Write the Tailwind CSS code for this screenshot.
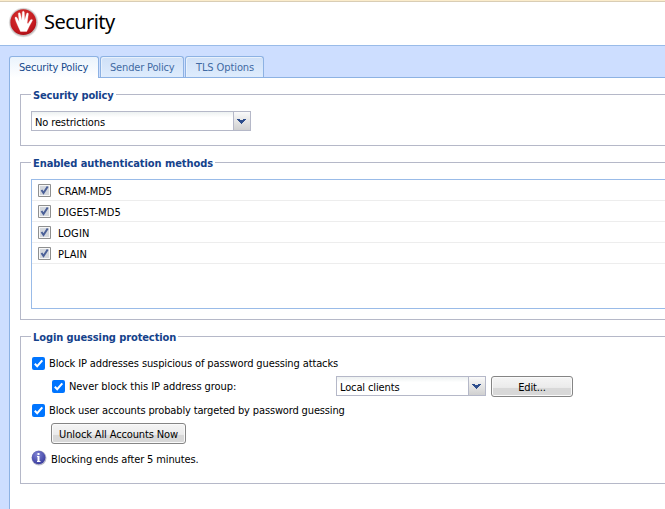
<!DOCTYPE html>
<html lang="en">
<head>
<meta charset="utf-8">
<title>Security</title>
<script src="https://cdn.jsdelivr.net/npm/@tailwindcss/browser@4"></script>
</head>
<body class="h-[509px] w-[665px] overflow-hidden bg-white font-['DejaVu_Sans_Condensed','DejaVu_Sans',sans-serif] [font-stretch:condensed] text-[11px] leading-[14px] tracking-[-0.13px] text-black">
<div class="flex h-full flex-col">
  <header class="flex h-[46px] shrink-0 border-t border-b border-t-[#fbeccb] border-b-[#99bbe8]">
    <div class="flex w-full border-t border-[#d9cdb5] pl-[8px]">
      <svg class="mt-[5px] h-[31px] w-[31px] shrink-0" viewBox="0 0 31 31">
        <defs><radialGradient id="r" cx=".45" cy=".35" r=".65"><stop offset="0" stop-color="#dc3631"/><stop offset=".8" stop-color="#c2181e"/><stop offset="1" stop-color="#ab1017"/></radialGradient></defs>
        <circle cx="15.5" cy="15.5" r="14.700" fill="#e4e4e4"/>
        <circle cx="15.5" cy="15.5" r="13.900" fill="#c6c0c0"/>
        <circle cx="15.3" cy="15.2" r="12.900" fill="url(#r)"/>
        <path d="M12.500 24.500C11 21.500 9.500 18 8 14.500L7 11.300C6.700 10 8.300 9.500 8.900 10.600L11.200 14.700L10.300 6.800C10.200 5.400 12 5.200 12.300 6.500L13.900 13.300L14.300 5.200C14.400 3.900 16.200 3.900 16.300 5.200L16.700 13.200L18.600 6.600C19 5.400 20.600 5.800 20.400 7.100L19.200 15.700C19.200 16.700 20 16.700 20.500 15.900L22.200 13.200C23 12 25 12.200 24.300 13.700L21.300 19.200C20.500 21.300 19.500 23 18.700 24.500Z" fill="#fff" stroke="#fff" stroke-width=".3"/>
      </svg>
      <h1 class="ml-[5px] mt-[7px] font-['Noto_Sans',sans-serif] text-[20px] leading-[26px] tracking-[-0.55px]">Security</h1>
    </div>
  </header>
  <main class="flex min-h-0 flex-1 flex-col bg-[#cddeff] pl-[9px] pt-[10px]">
    <nav class="flex h-[21px] shrink-0 gap-[2px] text-[#416aa3]">
      <div class="z-10 -mr-px h-[22px] w-[90px] rounded-t-[3px] border border-b-0 border-[#8db2e3] bg-linear-to-b from-[#eaf3fc] to-white pl-[9px] pt-[4px] tracking-[-0.2px] text-[#15498b]">Security Policy</div>
      <div class="h-[21px] w-[84px] rounded-t-[3px] border border-b-0 border-[#8db2e3] bg-linear-to-b from-[#cfe0f7] to-[#deecfd] pl-[9px] pt-[4px] tracking-[-0.17px] shadow-[inset_1px_1px_#e8f1fc]">Sender Policy</div>
      <div class="-ml-px h-[21px] w-[79px] rounded-t-[3px] border border-b-0 border-[#8db2e3] bg-linear-to-b from-[#cfe0f7] to-[#deecfd] pl-[10px] pt-[4px] tracking-[-0.1px] shadow-[inset_1px_1px_#e8f1fc]">TLS Options</div>
    </nav>
    <section class="flex-1 border-l border-t border-[#8db2e3] bg-white pl-[10px] pt-[9px]">
      <fieldset class="h-[59px] border border-r-0 border-[#b5b8c8] pl-[10px]">
        <legend class="h-[14px] px-[2px] font-bold leading-[18px] text-[#15428b]">Security policy</legend>
        <div class="mt-[10px] flex h-[20px] w-[220px] border border-[#b5b8c8] bg-linear-to-b from-[#edf1f1] to-white to-30%">
          <span class="flex-1 pl-[3px] pt-[4px]">No restrictions</span>
          <svg class="h-[18px] w-[17px] border-l border-[#b5b8c8] bg-linear-to-b from-[#fafafa] to-[#d0d0d0]" viewBox="0 0 16 18" shape-rendering="crispEdges"><path d="M3 7h3v1h3v-1h3v1h-1v1h-1v1h-1v1h-1v1h-1v-1h-1v-1h-1v-1h-1v-1h-1z" fill="#2d4d8c"/></svg>
        </div>
      </fieldset>
      <fieldset class="mt-[9px] h-[165px] border border-r-0 border-[#b5b8c8] pl-[10px]">
        <legend class="h-[14px] px-[2px] font-bold leading-[18px] tracking-[-0.07px] text-[#15428b]">Enabled authentication methods</legend>
        <div class="mt-[10px] h-[130px] border border-r-0 border-[#99bbe8] tracking-[0px]">
          <div class="flex h-[21px] items-start gap-[7px] border-b border-[#ededed] pl-[6px]"><svg class="mt-[4px] h-[13px] w-[13px]" viewBox="0 0 13 13"><path d="M.5.5h12v12H.5z" fill="#f7f7f7" stroke="#8e8f8f"/><path d="M2 2h9v9H2z" fill="#d3d7dd"/><path d="M3.500 6L5.500 9L9.700 2.500" fill="none" stroke="#4a5f97" stroke-width="2"/></svg><span class="mt-[5px] tracking-[-0.1px]">CRAM-MD5</span></div>
          <div class="flex h-[21px] items-start gap-[7px] border-b border-[#ededed] pl-[6px]"><svg class="mt-[4px] h-[13px] w-[13px]" viewBox="0 0 13 13"><path d="M.5.5h12v12H.5z" fill="#f7f7f7" stroke="#8e8f8f"/><path d="M2 2h9v9H2z" fill="#d3d7dd"/><path d="M3.500 6L5.500 9L9.700 2.500" fill="none" stroke="#4a5f97" stroke-width="2"/></svg><span class="mt-[5px] tracking-[0.1px]">DIGEST-MD5</span></div>
          <div class="flex h-[21px] items-start gap-[7px] border-b border-[#ededed] pl-[6px]"><svg class="mt-[4px] h-[13px] w-[13px]" viewBox="0 0 13 13"><path d="M.5.5h12v12H.5z" fill="#f7f7f7" stroke="#8e8f8f"/><path d="M2 2h9v9H2z" fill="#d3d7dd"/><path d="M3.500 6L5.500 9L9.700 2.500" fill="none" stroke="#4a5f97" stroke-width="2"/></svg><span class="mt-[5px] tracking-[0.1px]">LOGIN</span></div>
          <div class="flex h-[21px] items-start gap-[7px] border-b border-[#ededed] pl-[6px]"><svg class="mt-[4px] h-[13px] w-[13px]" viewBox="0 0 13 13"><path d="M.5.5h12v12H.5z" fill="#f7f7f7" stroke="#8e8f8f"/><path d="M2 2h9v9H2z" fill="#d3d7dd"/><path d="M3.500 6L5.500 9L9.700 2.500" fill="none" stroke="#4a5f97" stroke-width="2"/></svg><span class="mt-[5px]">PLAIN</span></div>
        </div>
      </fieldset>
      <fieldset class="mt-[9px] h-[155px] border border-r-0 border-[#b5b8c8] pl-[10px]">
        <legend class="h-[14px] px-[2px] font-bold leading-[18px] tracking-[-0.1px] text-[#15428b]">Login guessing protection</legend>
        <div class="mt-[11px] flex h-[18px] items-center gap-[4px] pl-[1px]"><svg class="h-[13px] w-[13px]" viewBox="0 0 13 13"><rect width="13" height="13" rx="2" fill="#0075ff"/><path d="M2.800 6.700L5.200 9.200L10.300 3.300" fill="none" stroke="#fff" stroke-width="2"/></svg><span class="pt-[2px] tracking-[-0.12px]">Block IP addresses suspicious of password guessing attacks</span></div>
        <div class="mt-[4px] flex h-[21px] items-start pl-[21px]">
          <svg class="mt-[4px] h-[13px] w-[13px]" viewBox="0 0 13 13"><rect width="13" height="13" rx="2" fill="#0075ff"/><path d="M2.800 6.700L5.200 9.200L10.300 3.300" fill="none" stroke="#fff" stroke-width="2"/></svg>
          <span class="ml-[4px] mt-[4px] w-[267px] tracking-[-0.06px]">Never block this IP address group:</span>
          <div class="flex h-[20px] w-[150px] border border-[#b5b8c8] bg-linear-to-b from-[#edf1f1] to-white to-30%">
            <span class="flex-1 pl-[3px] pt-[4px]">Local clients</span>
            <svg class="h-[18px] w-[17px] border-l border-[#b5b8c8] bg-linear-to-b from-[#fafafa] to-[#d0d0d0]" viewBox="0 0 16 18" shape-rendering="crispEdges"><path d="M3 7h3v1h3v-1h3v1h-1v1h-1v1h-1v1h-1v1h-1v-1h-1v-1h-1v-1h-1v-1h-1z" fill="#2d4d8c"/></svg>
          </div>
          <button class="ml-[5px] h-[21px] w-[82px] rounded-[3px] border border-[#858585] bg-linear-to-b from-[#f5f5f5] from-0% via-[#ebebeb] via-55% to-[#d8d8d8] to-60% pt-[2px] text-center shadow-[inset_0_0_0_1px_#fafafa]">Edit...</button>
        </div>
        <div class="mt-[4px] flex h-[18px] items-center gap-[4px] pl-[1px]"><svg class="h-[13px] w-[13px]" viewBox="0 0 13 13"><rect width="13" height="13" rx="2" fill="#0075ff"/><path d="M2.800 6.700L5.200 9.200L10.300 3.300" fill="none" stroke="#fff" stroke-width="2"/></svg><span class="pt-[2px] tracking-[-0.145px]">Block user accounts probably targeted by password guessing</span></div>
        <button class="ml-[20px] mt-[4px] block h-[21px] w-[135px] rounded-[3px] border border-[#858585] bg-linear-to-b from-[#f5f5f5] from-0% via-[#ebebeb] via-55% to-[#d8d8d8] to-60% pt-[2px] text-center shadow-[inset_0_0_0_1px_#fafafa]">Unlock All Accounts Now</button>
        <div class="mt-[6px] flex h-[16px] items-center gap-[4px]">
          <svg class="h-[16px] w-[16px]" viewBox="0 0 16 16"><defs><radialGradient id="i" cx=".4" cy=".3" r=".7"><stop offset="0" stop-color="#8084d4"/><stop offset="1" stop-color="#3b3da0"/></radialGradient></defs><circle cx="8" cy="8" r="7.500" fill="#b9b9c9"/><circle cx="7.600" cy="7.500" r="6.800" fill="url(#i)"/><path d="M6.500 3h2v2h-2zM6 6h2.500v5h1v1H6v-1h.5V7H6z" fill="#fff"/></svg>
          <span class="pt-[3px]">Blocking ends after 5 minutes.</span></div>
      </fieldset>
    </section>
  </main>
</div>
</body>
</html>
